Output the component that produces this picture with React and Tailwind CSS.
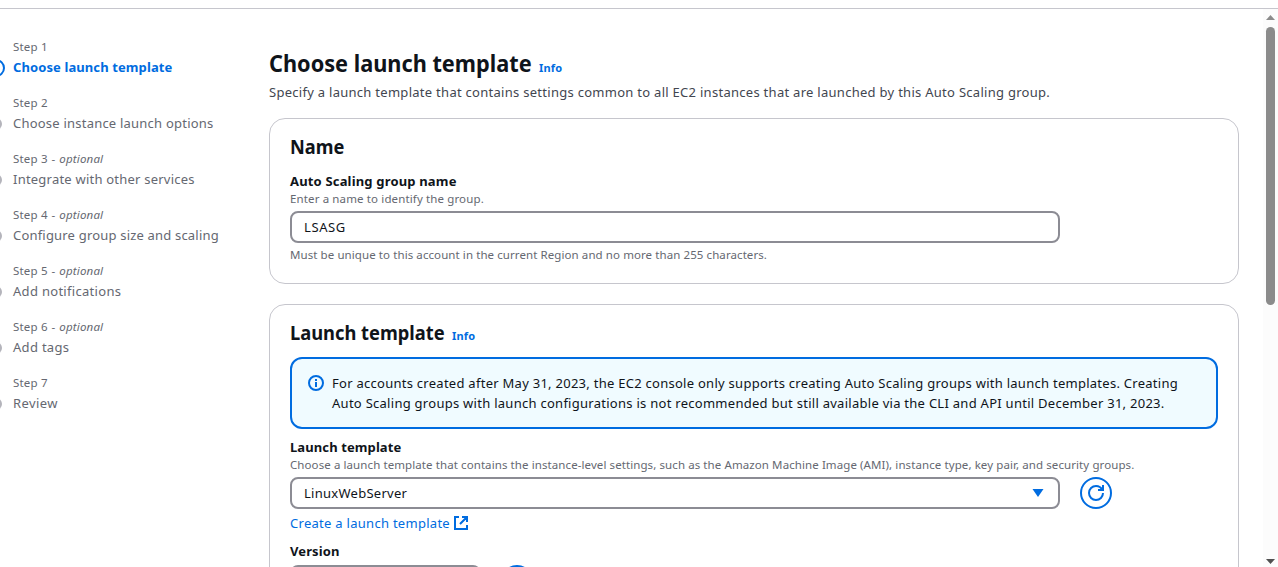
import React from 'react';

const steps = [
  { label: 'Step 1', title: 'Choose launch template', active: true, ls: 'tracking-[0.1px]' },
  { label: 'Step 2', title: 'Choose instance launch options', ls: 'tracking-[0.22px]' },
  { label: 'Step 3', optional: true, title: 'Integrate with other services', ls: 'tracking-[0.22px]' },
  { label: 'Step 4', optional: true, title: 'Configure group size and scaling', ls: 'tracking-[0.19px]' },
  { label: 'Step 5', optional: true, title: 'Add notifications', ls: 'tracking-[0.3px]' },
  { label: 'Step 6', optional: true, title: 'Add tags', ls: 'tracking-[0.3px]' },
  { label: 'Step 7', title: 'Review', ls: 'tracking-[0.4px]' },
];

function Step({ step }) {
  return (
    <li className="relative h-14 pl-[13px]">
      {step.active ? (
        <span className="absolute -left-[13px] top-5 size-[18px] rounded-full border-2 border-[#006ce0]" />
      ) : (
        <span className="absolute -left-[10px] top-[23px] size-3 rounded-full bg-[#b4b4bb]" />
      )}
      <div className="h-4 text-[11.5px] leading-4 tracking-[0.2px] text-[#656871]">
        {step.label}
        {step.optional && (
          <span>
            <span className="tracking-[0.6px]">{' - '}</span>
            <em className="tracking-[0.18px]">optional</em>
          </span>
        )}
      </div>
      <div
        className={`h-5 pt-0.5 text-[13px] leading-5 ${step.ls} ${
          step.active ? 'font-bold text-[#006ce0]' : 'text-[#656871]'
        }`}
      >
        {step.title}
      </div>
    </li>
  );
}

function Refresh() {
  return (
    <button className="flex size-8 shrink-0 items-center justify-center rounded-full border-2 border-[#006ce0] text-[#006ce0]">
      <svg width="16" height="16" viewBox="0 0 16 16" fill="none" stroke="currentColor" strokeWidth="2">
        <path d="M15 8c0 3.87-3.13 7-7 7s-7-3.13-7-7 3.13-7 7-7c2.790 0 5.200 1.630 6.330 4" />
        <path d="M10 5h5V0" />
      </svg>
    </button>
  );
}

function Info() {
  return <a className="text-[11px] font-bold leading-4 tracking-[0.2px] text-[#006ce0]">Info</a>;
}

export default function App() {
  return (
    <div className="flex h-screen flex-col overflow-hidden bg-white pt-2 font-['Noto_Sans','Open_Sans',sans-serif] text-[#0f141a]">
      <div className="flex min-h-0 flex-1 whitespace-nowrap border-t border-[#c6c6cd]">
        <nav className="w-[269px] shrink-0 pt-[30px]">
          <ol>
            {steps.map((s) => (
              <Step key={s.label} step={s} />
            ))}
          </ol>
        </nav>

        <main className="flex w-[970px] shrink-0 flex-col overflow-hidden pt-[39px]">
          <div className="flex h-[30px] items-baseline">
            <h1 className="w-[270px] origin-left scale-x-[0.905] text-2xl font-bold leading-[30px]">
              Choose launch template
            </h1>
            <Info />
          </div>
          <p className="mt-1 h-5 text-[13px] leading-5 tracking-[0.28px] text-[#424650]">
            Specify a launch template that contains settings common to all EC2 instances that are launched by this
            Auto Scaling group.
          </p>

          <section className="mt-4 h-[166px] shrink-0 rounded-2xl border border-[#c6c6cd] px-5 pt-4">
            <h2 className="w-[60px] origin-left scale-x-[0.91] text-xl font-bold leading-6">Name</h2>
            <div className="mt-3 text-[13px] font-bold leading-5 tracking-[0.17px]">Auto Scaling group name</div>
            <div className="text-[11.5px] leading-4 tracking-[0.13px] text-[#656871]">
              Enter a name to identify the group.
            </div>
            <div className="mt-1 flex h-8 w-[770px] items-center rounded-lg border-2 border-[#8c8c94] px-3 text-[13px] tracking-[0.6px]">
              <span className="pt-0.5">LSASG</span>
            </div>
            <div className="mt-1 text-[11.5px] leading-4 tracking-[0.085px] text-[#656871]">
              Must be unique to this account in the current Region and no more than 255 characters.
            </div>
          </section>

          <section className="mt-5 h-[320px] shrink-0 rounded-2xl border border-[#c6c6cd] px-5 pt-4">
            <div className="flex h-6 items-baseline">
              <h2 className="w-[162px] origin-left scale-x-[0.915] text-xl font-bold leading-6">Launch template</h2>
              <Info />
            </div>
            <div className="mt-3 flex h-[72px] gap-2 rounded-xl border-2 border-[#006ce0] bg-[#f0fbff] px-4 pt-3.5">
              <svg
                className="mt-0.5 shrink-0 text-[#006ce0]"
                width="16"
                height="16"
                viewBox="0 0 16 16"
                fill="none"
                stroke="currentColor"
                strokeWidth="2"
              >
                <circle cx="8" cy="8" r="7" />
                <path d="M8 4v2M8 7v5" />
              </svg>
              <div className="text-[13px] leading-5">
                <div className="tracking-[0.268px]">
                  For accounts created after May 31, 2023, the EC2 console only supports creating Auto Scaling groups
                  with launch templates. Creating
                </div>
                <div className="tracking-[0.272px]">
                  Auto Scaling groups with launch configurations is not recommended but still available via the CLI and
                  API until December 31, 2023.
                </div>
              </div>
            </div>
            <div className="mt-2 text-[13px] font-bold leading-5 tracking-[0.1px]">Launch template</div>
            <div className="text-[11.5px] leading-4 tracking-[0.09px] text-[#656871]">
              Choose a launch template that contains the instance-level settings, such as the Amazon Machine Image
              (AMI), instance type, key pair, and security groups.
            </div>
            <div className="mt-1 flex gap-5">
              <div className="flex h-8 w-[770px] items-center justify-between rounded-lg border-2 border-[#8c8c94] pl-3 pr-[14px] text-[13px] tracking-[0.27px]">
                <span className="pt-0.5">LinuxWebServer</span>
                <svg width="12" height="8" viewBox="0 0 12 8" fill="#006ce0">
                  <path d="M.5 0h11L6 8z" />
                </svg>
              </div>
              <Refresh />
            </div>
            <div className="mt-1 flex h-5 items-center text-[13px] leading-5 tracking-[0.28px] text-[#006ce0]">
              <a className="w-[163px]">Create a launch template</a>
              <svg width="16" height="16" viewBox="0 0 16 16" fill="none" stroke="currentColor" strokeWidth="2">
                <path d="M14 10v4H2V2h4M9 2h5v5M7 9l7-7" />
              </svg>
            </div>
            <div className="mt-2 text-[13px] font-bold leading-5 tracking-[0.1px]">Version</div>
            <div className="mt-1 flex gap-5">
              <div className="h-8 w-[191px] rounded-lg border-2 border-[#8c8c94]" />
              <Refresh />
            </div>
          </section>
        </main>

        <div className="ml-auto flex w-[15px] shrink-0 flex-col items-center bg-[#fcfcfc] pt-1.5">
          <svg width="9" height="5" viewBox="0 0 9 5" fill="#8b8b8b">
            <path d="M0 5h9L4.500 0z" />
          </svg>
          <div className="mt-[7px] h-[278px] w-[9px] rounded-full bg-[#8b8b8b]" />
          <svg className="mb-[3px] mt-auto" width="9" height="5" viewBox="0 0 9 5" fill="#505050">
            <path d="M0 0h9L4.500 5z" />
          </svg>
        </div>
      </div>
    </div>
  );
}
